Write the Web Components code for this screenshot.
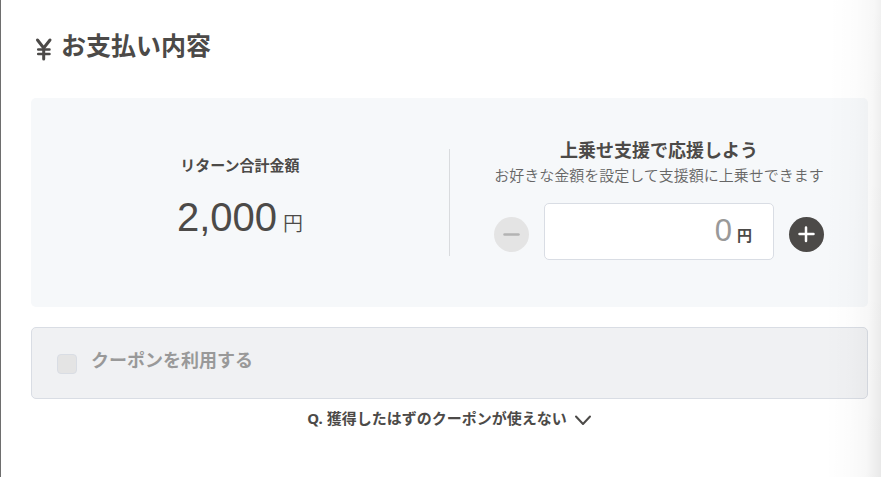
<!DOCTYPE html>
<html lang="ja">
<head>
<meta charset="utf-8">
<meta name="viewport" content="width=device-width, initial-scale=1">
<title>お支払い内容</title>
<style>
html { height: 100%; }
body {
  margin: 0; min-height: 100%; box-sizing: border-box; position: relative;
  border-left: 1px solid #6e6e6e; background: #fff; color: #4c4a48;
  font-family: "Liberation Sans", "Noto Sans CJK JP", sans-serif;
}
</style>
</head>
<body>
<payment-page>
  <section-title>お支払い内容</section-title>
  <payment-panel>
    <return-total slot="total" amount="2,000">リターン合計金額</return-total>
    <extra-support slot="extra">
      <span slot="title">上乗せ支援で応援しよう</span>
      <span slot="note">お好きな金額を設定して支援額に上乗せできます</span>
    </extra-support>
  </payment-panel>
  <coupon-option>クーポンを利用する</coupon-option>
  <faq-toggle>獲得したはずのクーポンが使えない</faq-toggle>
</payment-page>
<script>
const define = (name, html, setup) => customElements.define(name, class extends HTMLElement {
  constructor() {
    super();
    this.attachShadow({ mode: "open" }).innerHTML = html;
  }
  connectedCallback() { if (setup) setup(this, this.shadowRoot); }
});

define("payment-page", `
<style>
:host { display: block; padding: 28px 13px 24px 30px; }
.edge {
  position: absolute; top: 0; right: 0; bottom: 0; width: 52px; pointer-events: none;
  background: linear-gradient(91deg, rgba(0,0,0,0) 0%, rgba(0,0,0,.012) 45%, rgba(0,0,0,.03) 75%, rgba(0,0,0,.09) 100%);
}
</style>
<main><slot></slot></main><div class="edge"></div>`);

define("section-title", `
<style>
:host { display: block; margin-bottom: 34px; }
h2 { display: flex; align-items: center; gap: 8px; margin: 0; padding-left: 4px; font-size: 25px; line-height: 36px; font-weight: 700; }
svg { width: 18px; height: 24px; margin-top: 5px; flex: none; }
</style>
<h2><svg viewBox="0 0 18 24" fill="none" stroke="currentColor" stroke-width="3" stroke-linecap="round" aria-hidden="true"><path d="M2.500 3L8.700 11L15 3M8.700 11V22"/><path stroke-width="2.500" d="M3.200 12.500H14.500M3.200 17H14.500"/></svg><slot></slot></h2>`);

define("payment-panel", `
<style>
:host { display: grid; grid-template-columns: 1fr 1px 1fr; background: #f6f8fa; border-radius: 5px; padding: 41px 0 47px; margin-bottom: 20px; }
.line { background: #d9dbde; margin: 10px 0 4px; }
</style>
<slot name="total"></slot><div class="line"></div><slot name="extra"></slot>`);

define("return-total", `
<style>
:host { display: block; text-align: center; padding-top: 16px; }
h3 { margin: 0 0 16px; font-size: 15px; line-height: 22px; }
p { display: flex; justify-content: center; align-items: baseline; gap: 6px; margin: 0; font-size: 40px; line-height: 48px; }
small { font-size: 20px; font-weight: 350; }
</style>
<h3><slot></slot></h3><p><span id="amount"></span><small>円</small></p>`,
(host, root) => { root.getElementById("amount").textContent = host.getAttribute("amount"); });

define("extra-support", `
<style>
:host { display: flex; flex-direction: column; align-items: center; }
h3 { margin: 0; font-size: 18px; line-height: 25px; }
p { margin: 0 0 16px; font-size: 15px; line-height: 23px; font-weight: 350; color: #666; }
.row { display: flex; align-items: center; gap: 15px; }
button { width: 35px; height: 35px; flex: none; margin: 5px 0 0; padding: 0; border: 0; border-radius: 50%; background: #4c4a48; color: #fff; display: grid; place-items: center; }
button:disabled { background: #e4e4e4; color: #b3b3b3; }
svg { width: 19px; height: 19px; }
label { display: flex; align-items: baseline; box-sizing: border-box; width: 230px; height: 57px; padding: 0 21px; gap: 5px; background: #fff; border: 1px solid #d9dde4; border-radius: 5px; line-height: 53px; }
input { flex: 1; min-width: 0; border: 0; outline: 0; padding: 0; background: none; font: 31px/53px "Liberation Sans", sans-serif; color: #999; text-align: right; }
span { font-size: 15px; font-weight: 700; }
</style>
<h3><slot name="title"></slot></h3>
<p><slot name="note"></slot></p>
<div class="row">
<button type="button" id="minus" aria-label="減らす" disabled><svg viewBox="0 0 19 19" stroke="currentColor" stroke-width="2.500" stroke-linecap="round"><path d="M2.500 9.500H16.500"/></svg></button>
<label><input id="sum" type="text" inputmode="numeric" value="0" aria-label="上乗せ金額"><span>円</span></label>
<button type="button" id="plus" aria-label="増やす"><svg viewBox="0 0 19 19" stroke="currentColor" stroke-width="2.500" stroke-linecap="round"><path d="M2.500 9H16.500M9 2.500V16"/></svg></button>
</div>`,
(host, root) => {
  const sum = root.getElementById("sum"), minus = root.getElementById("minus");
  const step = (d) => {
    sum.value = Math.max(0, (Number(sum.value) || 0) + d);
    minus.disabled = sum.value === "0";
  };
  minus.onclick = () => step(-500);
  root.getElementById("plus").onclick = () => step(500);
});

define("coupon-option", `
<style>
:host { display: block; background: #f0f1f3; border: 1px solid #d9dde4; border-radius: 5px; padding: 21px 25px 24px; }
label { display: flex; align-items: center; gap: 14px; font-size: 18px; line-height: 25px; font-weight: 700; color: #999; }
input { appearance: none; box-sizing: border-box; flex: none; width: 20px; height: 20px; margin: 4px 0 0; border: 1px solid #d9dde4; border-radius: 4px; background: #e4e4e4; }
</style>
<label><input type="checkbox" disabled><span><slot></slot></span></label>`);

define("faq-toggle", `
<style>
:host { display: flex; justify-content: center; padding-top: 8px; }
button { display: flex; align-items: center; gap: 7px; padding: 0; border: 0; background: none; font: inherit; font-size: 15px; line-height: 22px; font-weight: 700; color: inherit; }
.q { font-family: "Noto Sans", "Noto Sans CJK JP", sans-serif; }
svg { width: 18px; height: 12px; margin-top: 4px; }
</style>
<button type="button" aria-expanded="false"><span class="q">Q. <slot></slot></span><svg viewBox="0 0 18 12" fill="none" stroke="currentColor" stroke-width="2" stroke-linecap="round" stroke-linejoin="round" aria-hidden="true"><path d="M2 2.500L9 10L16 2.500"/></svg></button>`,
(host, root) => {
  const b = root.querySelector("button");
  b.onclick = () => b.setAttribute("aria-expanded", b.getAttribute("aria-expanded") !== "true");
});
</script>
</body>
</html>
